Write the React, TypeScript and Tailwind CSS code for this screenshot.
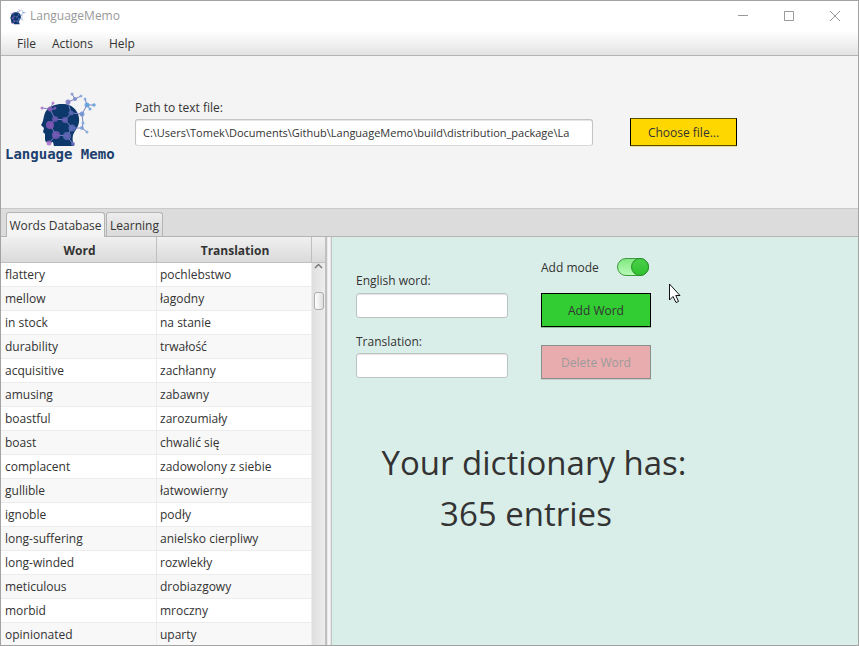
import { useState } from "react";

const WORDS: [string, string][] = [
  ["flattery", "pochlebstwo"],
  ["mellow", "łagodny"],
  ["in stock", "na stanie"],
  ["durability", "trwałość"],
  ["acquisitive", "zachłanny"],
  ["amusing", "zabawny"],
  ["boastful", "zarozumiały"],
  ["boast", "chwalić się"],
  ["complacent", "zadowolony z siebie"],
  ["gullible", "łatwowierny"],
  ["ignoble", "podły"],
  ["long-suffering", "anielsko cierpliwy"],
  ["long-winded", "rozwlekły"],
  ["meticulous", "drobiazgowy"],
  ["morbid", "mroczny"],
  ["opinionated", "uparty"],
];

const NODES: [number, number, number, string][] = [
  [13, 19, 2.5, "#8a5cb8"],
  [5, 18, 1.5, "#b070c8"],
  [16, 13, 1.5, "#b070c8"],
  [18, 18, 1.5, "#8a5cb8"],
  [18, 29, 3, "#6b58b0"],
  [28, 30, 3, "#6b60b8"],
  [13, 35, 4, "#8a58b8"],
  [19, 45, 4, "#7a5cb8"],
  [30, 46, 4, "#6468b8"],
  [35, 38, 3.5, "#5f70bc"],
  [34, 23, 2.5, "#5a68b4"],
  [12, 53, 2.5, "#a870c8"],
  [36, 54, 2, "#6a6cbc"],
  [31, 12, 2.5, "#7a78c4"],
  [38, 9, 2, "#7488cc"],
  [35, 4, 1.5, "#8890d0"],
  [44, 6, 1.5, "#8aa4d8"],
  [45, 24, 2.5, "#7090d0"],
  [50, 15, 2.5, "#62a0dc"],
  [48, 9, 1.5, "#7aa8dc"],
  [57, 15, 1.8, "#62a0dc"],
  [53, 19, 1.5, "#62a0dc"],
  [46, 33, 1.5, "#7aa8dc"],
  [45, 38, 2, "#7aa0d8"],
  [50, 42, 1.5, "#7aa8dc"],
];

function HeadLogo({ className }: { className: string }) {
  return (
    <svg className={className} viewBox="0 0 60 58" aria-hidden="true">
      <path
        d="M25 14C33 13 41 19 42 28C43 36 38 40 36 45C35 49 36 53 37 56H17L16 52C11 53 8 53 8 49V44L6 42L7 38L4 35C7 31 6 26 9 21C13 16 18 14 25 14Z"
        fill="#0d386b"
      />
      <path
        d="M5 18L13 19L16 13M13 19H18M13 19L18 29L28 30L34 23L31 12L38 9L35 4M38 9L44 6M18 29L13 35L19 45L30 46L35 38L28 30M34 23L45 24L50 15L48 9M50 15H57M50 15L53 19M45 24L46 33L45 38L50 42M45 38H35M30 46L36 54M19 45L12 53"
        fill="none"
        stroke="#7b82c4"
        strokeWidth="1"
      />
      {NODES.map(([x, y, r, fill]) => (
        <circle key={`${x}-${y}`} cx={x} cy={y} r={r} fill={fill} fillOpacity="0.85" />
      ))}
    </svg>
  );
}

function TitleBar() {
  const control = "flex w-[46px] items-center justify-center";
  return (
    <header className="flex h-[30px] shrink-0 bg-white">
      <div className="flex flex-1 items-center gap-1 pl-2 text-[#999]">
        <HeadLogo className="h-[17px] w-[17px]" />
        <h1>LanguageMemo</h1>
      </div>
      <button aria-label="Minimize" className={control}>
        <svg width="10" height="10" stroke="#999" aria-hidden="true"><path d="M0 4.5H10" /></svg>
      </button>
      <button aria-label="Maximize" className={control}>
        <svg width="10" height="10" fill="none" stroke="#999" aria-hidden="true"><path d="M.5.5H9.5V9.5H.5Z" /></svg>
      </button>
      <button aria-label="Close" className={control}>
        <svg width="10" height="10" stroke="#999" aria-hidden="true"><path d="M0 0L10 10M10 0L0 10" /></svg>
      </button>
    </header>
  );
}

function WordTable() {
  const head = "h-[26px] border-b border-[#bfbfbf] bg-linear-to-b from-[#f0f0f0] to-[#dadada]";
  const cell = "h-6 border-r border-b border-[#ececec] p-0 pt-px";
  return (
    <div className="flex w-[326px] shrink-0 border-r-2 border-[#c0c0c0]">
      <table className="flex-1 table-fixed border-separate border-spacing-0 self-start">
        <thead>
          <tr>
            <th className={`${head} w-[156px] border-r p-0 pt-0.5 pl-0.5 font-bold`}>Word</th>
            <th className={`${head} w-[155px] border-r p-0 pt-0.5 pl-0.5 font-bold`}>Translation</th>
          </tr>
        </thead>
        <tbody>
          {WORDS.map(([word, translation]) => (
            <tr key={word} className="odd:bg-white even:bg-[#f8f8f8]">
              <td className={`${cell} pl-1`}>{word}</td>
              <td className={`${cell} pl-[3px]`}>{translation}</td>
            </tr>
          ))}
        </tbody>
      </table>
      <div className="flex w-[13px] shrink-0 flex-col bg-linear-to-r from-[#dfdfdf] to-[#ededed]">
        <div className={`${head} shrink-0`} />
        <svg className="mx-auto" width="9" height="7" fill="none" stroke="#777" strokeWidth="1.4" aria-hidden="true">
          <path d="M1 5L4.5 1.5L8 5" />
        </svg>
        <div className="mx-auto mt-[22px] h-[18px] w-[10px] rounded-[3px] border border-[#adadad] bg-linear-to-r from-white to-[#dedede]" />
      </div>
    </div>
  );
}

function WordForm() {
  const [addMode, setAddMode] = useState(true);
  const field =
    "h-[25px] w-full rounded-[3px] border border-[#bcc4c1] bg-white px-2 shadow-[inset_0_1px_1px_#e4e4e4] outline-none";
  return (
    <form className="flex gap-[33px]" onSubmit={(e) => e.preventDefault()}>
      <div className="flex w-[152px] flex-col pt-[15px]">
        <label htmlFor="english" className="mb-1">English word:</label>
        <input id="english" className={field} />
        <label htmlFor="translation" className="mt-4 mb-[3px]">Translation:</label>
        <input id="translation" className={field} />
      </div>
      <div className="flex w-[110px] flex-col">
        <label className="flex h-[18px] items-center justify-between pr-[2px]">
          <span className="pt-0.5">Add mode</span>
          <input
            type="checkbox"
            role="switch"
            checked={addMode}
            onChange={(e) => setAddMode(e.target.checked)}
            className="peer sr-only"
          />
          <span className="flex h-[18px] w-8 shrink-0 justify-start rounded-full border border-[#3d9a3d] bg-linear-to-b from-[#80e880] to-[#b8fab8] peer-checked:justify-end">
            <span className="-my-px -mr-px h-[18px] w-[18px] rounded-full border border-[#259025] bg-linear-to-b from-[#48cf48] to-[#2fc22f]" />
          </span>
        </label>
        <button className="mt-[17px] h-[34px] border border-black bg-[#32cd32] pt-px text-[#333] shadow-[0_1px_0_#8fbf99]">
          Add Word
        </button>
        <button disabled className="mt-[18px] h-[34px] border border-[#87908d] bg-[#e9acae] pt-px text-[#9b9b9b] shadow-[0_1px_0_#c9cfcc]">
          Delete Word
        </button>
      </div>
    </form>
  );
}

export default function App() {
  return (
    <div className="relative flex h-screen flex-col overflow-hidden border border-[#a3a3a3] bg-[#f4f4f4] font-['Open_Sans','Noto_Sans',sans-serif] text-[12px] leading-4 text-[#333]">
      <TitleBar />
      <nav className="flex h-[25px] shrink-0 items-center gap-4 border-b border-[#b4b4b4] bg-linear-to-b from-white to-[#e3e3e3] pt-0.5 pl-4">
        <button>File</button>
        <button>Actions</button>
        <button>Help</button>
      </nav>

      <section className="flex h-[152px] shrink-0 items-start pt-[34px] pl-1">
        <div className="flex w-[130px] shrink-0 flex-col">
          <HeadLogo className="ml-8 h-[58px] w-[60px]" />
          <p className="font-['DejaVu_Sans_Mono',monospace] text-[14px] leading-3 font-bold whitespace-nowrap text-[#1c416f]">
            Language Memo
          </p>
        </div>
        <div className="flex w-[458px] flex-col gap-[3px] pt-2.5">
          <label htmlFor="path">Path to text file:</label>
          <input
            id="path"
            className="h-[27px] w-full rounded-[3px] border border-[#c4c4c4] border-b-[#d8d8d8] bg-white px-[7px] text-[11px] shadow-[inset_0_1px_1px_#e4e4e4] outline-none"
            defaultValue="C:\Users\Tomek\Documents\Github\LanguageMemo\build\distribution_package\La"
          />
        </div>
        <button className="mt-7 ml-[37px] h-7 w-[107px] border border-black border-t-[#5c4d00] border-b-[#5c4d00] bg-[#ffd700] pt-0.5 shadow-[0_1px_0_#e6dba0]">
          Choose file...
        </button>
      </section>

      <div role="tablist" className="flex h-[29px] shrink-0 items-end gap-px border-t border-b border-t-[#cacaca] border-b-[#b4b4b4] bg-[#dcdcdc] pl-[5px]">
        <button role="tab" aria-selected="true" className="-mb-px h-[25px] w-[99px] rounded-t-[3px] border border-b-0 border-[#b4b4b4] bg-[#f4f4f4] pt-px whitespace-nowrap">
          Words Database
        </button>
        <button role="tab" aria-selected="false" className="h-6 w-[57px] rounded-t-[3px] border border-b-0 border-[#b4b4b4] bg-linear-to-b from-[#ededed] to-[#dadada] pt-0.5 whitespace-nowrap">
          Learning
        </button>
      </div>

      <main className="flex min-h-0 flex-1 overflow-hidden">
        <WordTable />
        <div className="w-[5px] shrink-0 border-r border-[#c4c4c4] bg-linear-to-r from-[#e4e2e2] via-white to-[#dedede]" />
        <section className="min-w-0 flex-1 bg-[#daeee9] pt-[21px] pl-6">
          <WordForm />
          <div className="mt-[58px] w-[356px] text-center text-[33px] leading-[51px] whitespace-nowrap">
            <p>Your dictionary has:</p>
            <p className="pr-4">365 entries</p>
          </div>
        </section>
      </main>

      <svg className="absolute top-[282px] left-[667px]" width="13" height="21" fill="white" stroke="#111" aria-hidden="true">
        <path d="M1.5 1V17L5 13.5L8 19.5L10.5 18.5L7.8 12.5H12Z" />
      </svg>
    </div>
  );
}
